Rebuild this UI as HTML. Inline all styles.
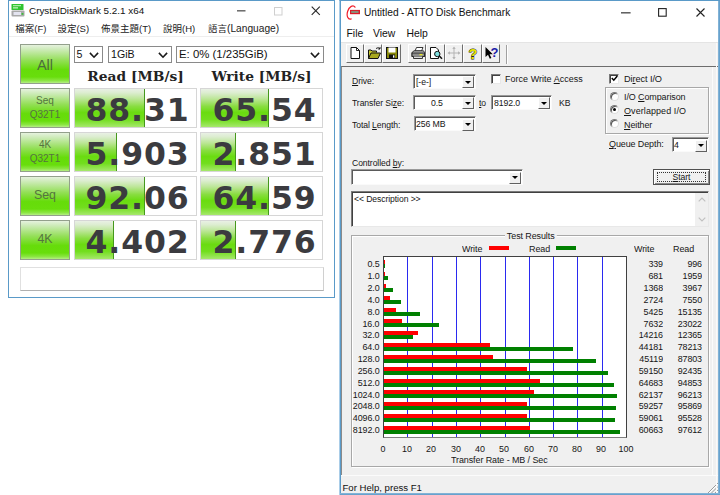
<!DOCTYPE html>
<html lang="zh-Hant"><head><meta charset="utf-8"><title>CrystalDiskMark / ATTO Disk Benchmark</title>
<style>
html,body{margin:0;padding:0;}
body{width:720px;height:495px;background:#fff;position:relative;overflow:hidden;font-family:"Liberation Sans","Noto Sans CJK TC",sans-serif;}
.abs,#cdm div,#cdm svg,#atto div,#atto svg{position:absolute;box-sizing:border-box;white-space:nowrap;}
#cdm{position:absolute;left:8px;top:0;width:327px;height:298px;border:1px solid #5a9ac8;background:#fff;box-sizing:border-box;}
#atto{position:absolute;left:339px;top:0;width:381px;height:495px;background:#f0f0f0;box-sizing:border-box;border-left:1px solid #a9cde8;border-top:1px solid #5a9ac8;}
/* ---- CDM ---- */
#cdm .title{left:20px;top:2.5px;font-size:9.9px;color:#111;line-height:14px;}
#cdm .menu{top:21px;font-size:9.5px;color:#222;line-height:14px;}
#cdm .sep{left:0;top:35px;width:325px;height:1px;background:#eee;}
.gbtn{border:1px solid #93a08c;background:linear-gradient(#e6f2de 0%,#cdebb8 12%,#94df58 40%,#66dc0a 65%,#68de0c 84%,#8ce644 94%,#b4ee84 100%);color:#55743f;text-align:center;font-size:10px;line-height:13.5px;}
.vbox{height:40px;width:123px;border:1px solid #d6d6d6;background:#fff;overflow:hidden;}
.vbox .fill{left:0;top:0;height:38px;background:linear-gradient(#e9f0e5 0%,#dcedd0 10%,#bce697 26%,#88dd40 46%,#6adc10 62%,#72de1e 80%,#a6e86c 100%);border-right:1px solid #45981c;}
.vbox .num{right:5.4px;top:1.8px;letter-spacing:0.9px;line-height:38px;font-family:"DejaVu Sans","Liberation Sans",sans-serif;font-weight:bold;font-size:31.5px;color:#3b3b3f;}
.hdr{font-family:"DejaVu Serif","Liberation Serif",serif;font-weight:bold;font-size:13.8px;color:#222;line-height:16px;text-align:center;}
.cmb{border:1px solid #8a8a8a;background:#fff;height:17px;font-size:10.6px;line-height:15px;color:#111;padding-left:2px;}
.cmb svg{right:2.8px;top:5.2px;}
.tbox{left:11px;top:266px;width:304px;height:24px;border:1px solid #e0e0e0;border-bottom-color:#b0b0b0;border-right-color:#d0d0d0;background:#fff;}
/* ---- ATTO ---- */
#atto .tbar{left:0;top:0;width:380px;height:22px;background:#fff;}
#atto .title{left:24px;top:3.5px;font-size:10.2px;line-height:15px;color:#111;}
#atto .mbar{left:0;top:22px;width:380px;height:19px;background:#fff;}
#atto .mi{top:26px;font-size:10.4px;line-height:14px;color:#111;}
#atto .tool{left:1px;top:41px;width:379px;height:24px;background:#f0f0f0;border-top:1px solid #e4e4e4;}
#atto .client{left:1px;top:65px;width:378px;height:409px;border-top:1px solid #6d6d6d;border-left:1px solid #8a8a8a;background:#f0f0f0;}
.tb{top:43.4px;width:18.4px;height:18.8px;border:1px solid #fff;border-right-color:#6e6e6e;border-bottom-color:#6e6e6e;background:#f0f0f0;}
.lbl{font-size:9.7px;line-height:12px;color:#161616;letter-spacing:-0.1px;transform:scaleX(0.89);transform-origin:0 50%;margin-top:1px;}
.lbl u{text-decoration:underline;text-decoration-thickness:1px;text-underline-offset:1px;}
.combo{height:15px;background:#fff;border:1px solid #9a9a9a;border-right-color:#fafafa;border-bottom-color:#fafafa;box-shadow:inset 1px 1px 0 #5a5a5a;font-size:9.7px;line-height:13px;color:#161616;padding-left:1.5px;padding-top:0;}
.combo span{display:inline-block;transform:scaleX(0.9);transform-origin:0 50%;letter-spacing:-0.1px;}
.combo .dd{right:1px;top:1.5px;width:12px;height:12px;background:#f0f0f0;border:1px solid #fff;border-right-color:#606060;border-bottom-color:#606060;}
.combo .dd:after{content:"";position:absolute;left:2px;top:3.5px;border-left:3px solid transparent;border-right:3px solid transparent;border-top:3px solid #000;}
.chk{width:10px;height:10px;background:#fff;border:1px solid #7a7a7a;border-right-color:#e8e8e8;border-bottom-color:#e8e8e8;box-shadow:inset 1px 1px 0 #404040;}
.rad{width:9px;height:9px;border-radius:50%;background:#fff;border:1px solid #7a7a7a;border-right-color:#ddd;border-bottom-color:#ddd;box-shadow:inset 1px 1px 0 #555;}
.grp{border:1px solid #a8a8a8;box-shadow:1px 1px 0 #fff, inset 1px 1px 0 #fff;}
.gl{width:1px;height:180px;background:#2a2af0;}
.rl{left:0;width:39.5px;text-align:right;font-size:9.7px;line-height:13px;color:#161616;letter-spacing:-0.1px;transform:scaleX(0.92);transform-origin:100% 50%;}
.bw{left:44px;height:4px;background:#f00;}
.br{left:44px;height:4px;background:#008000;}
.nw{left:250px;width:73px;text-align:right;font-size:9.7px;line-height:13px;color:#161616;letter-spacing:-0.1px;transform:scaleX(0.92);transform-origin:100% 50%;}
.nr{left:290px;width:72px;text-align:right;font-size:9.7px;line-height:13px;color:#161616;letter-spacing:-0.1px;transform:scaleX(0.92);transform-origin:100% 50%;}
.al{top:440.5px;width:30px;text-align:center;font-size:9.7px;line-height:13px;color:#161616;transform:scaleX(0.92);}
.w{transform:scaleX(0.925) !important;}
.w2{transform:scaleX(0.95) !important;}

</style></head><body>
<div id="cdm">
  <svg style="left:2px;top:3px" width="14" height="13" viewBox="0 0 14 13"><rect x="0.5" y="0" width="12" height="6" rx="0.5" fill="#2fc42f"/><rect x="2" y="1.2" width="8" height="1" fill="#c8f4c0"/><rect x="2" y="3.4" width="5" height="1" fill="#e8ffe0"/><rect x="0.5" y="6.5" width="13" height="6" rx="1" fill="#a9a9a9"/><rect x="2.5" y="8" width="7.5" height="3" fill="#e4e4f0"/><rect x="10.6" y="9" width="1.8" height="1.8" fill="#38c038"/></svg>
  <div class="title">CrystalDiskMark 5.2.1 x64</div>
  <svg style="left:228px;top:9.3px" width="9" height="2" viewBox="0 0 9 2"><rect x="0" y="0.3" width="8.5" height="1.1" fill="#333"/></svg>
  <svg style="left:265px;top:6px" width="9" height="9" viewBox="0 0 9 9"><rect x="0.5" y="0.5" width="7.5" height="7.5" fill="none" stroke="#cfcfcf" stroke-width="1"/></svg>
  <svg style="left:302.3px;top:5.3px" width="10" height="10" viewBox="0 0 10 10"><path d="M0.7 0.7 L8.8 8.8 M8.8 0.7 L0.7 8.8" stroke="#2a2a2a" stroke-width="1.15" fill="none"/></svg>
  <div class="menu" style="left:6.3px">檔案(F)</div>
  <div class="menu" style="left:48.4px">設定(S)</div>
  <div class="menu" style="left:92px">佈景主題(T)</div>
  <div class="menu" style="left:154px">說明(H)</div>
  <div class="menu" style="left:199px">語言<span style="font-size:10.2px">(Language)</span></div>
  <div class="sep"></div>

  <div class="gbtn" style="left:11px;top:43px;width:50px;height:40px;font-size:14.5px;line-height:40px;color:#4c6e3a">All</div>
  <div class="cmb" style="left:64.5px;top:45px;width:29px">5<svg width="10" height="6.4" viewBox="0 0 10 6.4"><path d="M0.9 0.9 L5 5.2 L9.1 0.9" stroke="#1a1a1a" stroke-width="1.6" fill="none"/></svg></div>
  <div class="cmb" style="left:99px;top:45px;width:64px">1GiB<svg width="10" height="6.4" viewBox="0 0 10 6.4"><path d="M0.9 0.9 L5 5.2 L9.1 0.9" stroke="#1a1a1a" stroke-width="1.6" fill="none"/></svg></div>
  <div class="cmb" style="left:167px;top:45px;width:147.8px;font-size:11.4px">E: 0% (1/235GiB)<svg width="10" height="6.4" viewBox="0 0 10 6.4"><path d="M0.9 0.9 L5 5.2 L9.1 0.9" stroke="#1a1a1a" stroke-width="1.6" fill="none"/></svg></div>
  <div class="hdr" style="left:65px;top:67px;width:123px">Read [MB/s]</div>
  <div class="hdr" style="left:191px;top:67px;width:123px">Write [MB/s]</div>

  <div class="gbtn" style="left:11px;top:87px;width:50px;height:40px;padding-top:5.2px">Seq<br>Q32T1</div>
  <div class="vbox" style="left:65px;top:87px"><div class="fill" style="width:70.3px"></div><div class="num" style="right:6.4px">88.31</div></div>
  <div class="vbox" style="left:191px;top:87px"><div class="fill" style="width:68px"></div><div class="num">65.54</div></div>

  <div class="gbtn" style="left:11px;top:131px;width:50px;height:40px;padding-top:5.2px">4K<br>Q32T1</div>
  <div class="vbox" style="left:65px;top:131px"><div class="fill" style="width:41.8px"></div><div class="num" style="right:6.4px">5.903</div></div>
  <div class="vbox" style="left:191px;top:131px"><div class="fill" style="width:34.7px"></div><div class="num">2.851</div></div>

  <div class="gbtn" style="left:11px;top:175px;width:50px;height:40px;font-size:12.4px;line-height:37px">Seq</div>
  <div class="vbox" style="left:65px;top:175px"><div class="fill" style="width:70.3px"></div><div class="num" style="right:6.4px">92.06</div></div>
  <div class="vbox" style="left:191px;top:175px"><div class="fill" style="width:68px"></div><div class="num">64.59</div></div>

  <div class="gbtn" style="left:11px;top:219px;width:50px;height:40px;font-size:12.4px;line-height:37px">4K</div>
  <div class="vbox" style="left:65px;top:219px"><div class="fill" style="width:39.2px"></div><div class="num" style="right:6.4px">4.402</div></div>
  <div class="vbox" style="left:191px;top:219px"><div class="fill" style="width:35px"></div><div class="num">2.776</div></div>

  <div class="tbox"></div>
</div>

<div id="atto">
  <div class="tbar"></div>
  <div style="left:0;top:0;width:1px;height:494px;background:#5a9ac8;z-index:5"></div>
  <svg style="left:6px;top:4px" width="16" height="15" viewBox="0 0 16 15"><path d="M9.01 2.16 A4 6.8 18 1 0 5.2 13.88" fill="none" stroke="#f0202c" stroke-width="1.2" stroke-linecap="round"/><rect x="4" y="4.9" width="10" height="4.3" fill="#dc1a28"/><rect x="5.2" y="5.9" width="7.4" height="2.1" fill="#8c8c78"/></svg>
  <div class="title">Untitled - ATTO Disk Benchmark</div>
  <svg style="left:281px;top:11px" width="10" height="2" viewBox="0 0 10 2"><rect x="0" y="0.3" width="9.6" height="1.1" fill="#222"/></svg>
  <svg style="left:318px;top:7px" width="9" height="9" viewBox="0 0 9 9"><rect x="0.6" y="0.6" width="7.6" height="7.6" fill="none" stroke="#222" stroke-width="1.1"/></svg>
  <svg style="left:356px;top:7px" width="9" height="9" viewBox="0 0 9 9"><path d="M0.5 0.5 L8.5 8.5 M8.5 0.5 L0.5 8.5" stroke="#222" stroke-width="1.1" fill="none"/></svg>
  <div class="mbar"></div>
  <div class="mi" style="left:6.5px">File</div>
  <div class="mi" style="left:33px">View</div>
  <div class="mi" style="left:66.5px">Help</div>
  <div class="tool"></div>
  <div class="tb" style="left:5.6px"><svg width="18" height="18" viewBox="0 0 18 18" style="left:-0.5px;top:-1.2px"><path d="M5 3.5 H10.5 L13.5 6.5 V14.5 H5 Z" fill="#fff" stroke="#111" stroke-width="1"/><path d="M10.5 3.5 V6.5 H13.5" fill="none" stroke="#111" stroke-width="0.9"/></svg></div>
  <div class="tb" style="left:24px"><svg width="18" height="18" viewBox="0 0 18 18" style="left:-0.5px;top:-1.2px"><path d="M3.5 14.5 V6 H6 L7 7 H11.5 V8.5" fill="#c9c92c" stroke="#111" stroke-width="1"/><path d="M3.5 14.5 L6 9 H15.5 L13 14.5 Z" fill="#a8a81e" stroke="#111" stroke-width="1"/><path d="M11 4.5 q2.5 -2 4 0.5 l0 -2 M15 5 l-1.8 0" fill="none" stroke="#111" stroke-width="0.9"/></svg></div>
  <div class="tb" style="left:42.4px"><svg width="18" height="18" viewBox="0 0 18 18" style="left:-0.5px;top:-1.2px"><rect x="3.5" y="3.5" width="11" height="11" fill="#8a8a0a" stroke="#111" stroke-width="1"/><rect x="5.5" y="3.5" width="7" height="5" fill="#fff"/><rect x="6" y="10.5" width="6" height="4" fill="#111"/><rect x="10" y="11.3" width="1.4" height="2.4" fill="#fff"/></svg></div>
  <div class="tb" style="left:68px"><svg width="18" height="18" viewBox="0 0 18 18" style="left:-0.5px;top:-1.2px"><path d="M6 7 L7.5 3.5 H14 L12.5 7 Z" fill="#fff" stroke="#222" stroke-width="0.9"/><path d="M3 8.5 L5 6.8 H14.5 L15.5 8.5 V12.5 H3 Z" fill="#b8b8b8" stroke="#222" stroke-width="0.9"/><rect x="3" y="9" width="12.5" height="3.5" fill="#8c8c8c" stroke="#222" stroke-width="0.9"/><rect x="10.5" y="10" width="3" height="1.3" fill="#e8e820"/><path d="M4.5 12.5 V14.5 H13.5 V12.5" fill="#ddd" stroke="#222" stroke-width="0.9"/></svg></div>
  <div class="tb" style="left:86.4px"><svg width="18" height="18" viewBox="0 0 18 18" style="left:-0.5px;top:-1.2px"><path d="M3.5 3.5 H9 L11.5 6 V14.5 H3.5 Z" fill="#fff" stroke="#111" stroke-width="1"/><circle cx="10.3" cy="10" r="2.7" fill="#7fe0e0" stroke="#111" stroke-width="1"/><path d="M12.3 12 L15 14.8" stroke="#111" stroke-width="1.6"/></svg></div>
  <div class="tb" style="left:104.8px"><svg width="18" height="18" viewBox="0 0 18 18" style="left:-0.5px;top:-1.2px"><path d="M9 3.5 V14.5 M3.5 9 H14.5" stroke="#b4b4b4" stroke-width="1"/><path d="M9 2.5 L7.3 5 H10.7 Z M9 15.5 L7.3 13 H10.7 Z M2.5 9 L5 7.3 V10.7 Z M15.5 9 L13 7.3 V10.7 Z" fill="#b4b4b4"/></svg></div>
  <div class="tb" style="left:123.3px"><svg width="18" height="18" viewBox="0 0 18 18" style="left:-0.5px;top:-1.2px"><text x="9" y="14.6" text-anchor="middle" font-family="Liberation Sans, sans-serif" font-weight="bold" font-size="14.5" fill="#e6e600" stroke="#222" stroke-width="0.9" paint-order="stroke">?</text></svg></div>
  <div class="tb" style="left:141.9px"><svg width="18" height="18" viewBox="0 0 18 18" style="left:-0.5px;top:-1.2px"><path d="M3.5 3 V13 L6 10.8 L7.8 14.8 L9.4 14 L7.6 10.2 H10.8 Z" fill="#000"/><text x="12.6" y="13" text-anchor="middle" font-family="Liberation Sans, sans-serif" font-weight="bold" font-size="13" fill="#1a1aa8">?</text></svg></div>
  <div style="left:166px;top:44px;width:1px;height:19px;background:#a0a0a0;border-right:1px solid #fff;box-sizing:content-box"></div>
  <div class="client"></div>

  <div class="lbl" style="left:11.5px;top:73px"><u>D</u>rive:</div>
  <div class="combo" style="left:73.3px;top:72.5px;width:62.3px"><span>[-e-]</span><div class="dd"></div></div>
  <div class="lbl" style="left:11.5px;top:95px">Transfer Si<u>z</u>e:</div>
  <div class="combo" style="left:73.3px;top:93.8px;width:62.3px;text-align:center;padding:0 14px 0 0"><span>0.5</span><div class="dd"></div></div>
  <div class="lbl" style="left:139px;top:95px"><u>t</u>o</div>
  <div class="combo" style="left:151px;top:93.8px;width:61px"><span>8192.0</span><div class="dd"></div></div>
  <div class="lbl" style="left:219px;top:95px">KB</div>
  <div class="lbl" style="left:11.5px;top:117px">Total <u>L</u>ength:</div>
  <div class="combo" style="left:73.5px;top:115.2px;width:62.3px"><span>256 MB</span><div class="dd"></div></div>

  <div class="chk" style="left:151.3px;top:72.6px"></div>
  <div class="lbl w" style="left:165px;top:71.3px;letter-spacing:0.05px">Force Write <u>A</u>ccess</div>
  <div class="chk" style="left:269.3px;top:72.6px"><svg style="left:0.5px;top:0.5px" width="7" height="7" viewBox="0 0 7 7"><path d="M0.8 3 L2.8 5.2 L6.3 1" stroke="#000" stroke-width="1.5" fill="none"/></svg></div>
  <div class="lbl w2" style="left:284px;top:71.3px">Di<u>r</u>ect I/O</div>
  <div class="grp" style="left:265px;top:86px;width:104px;height:47px"></div>
  <div class="rad" style="left:270px;top:90.5px"></div>
  <div class="lbl w" style="left:284px;top:89.3px">I/O <u>C</u>omparison</div>
  <div class="rad" style="left:270px;top:104.3px"><div style="left:2px;top:2px;width:3px;height:3px;background:#000;border-radius:50%"></div></div>
  <div class="lbl w" style="left:284px;top:103px;letter-spacing:0.1px"><u>O</u>verlapped I/O</div>
  <div class="rad" style="left:270px;top:118.2px"></div>
  <div class="lbl w" style="left:284px;top:117px"><u>N</u>either</div>
  <div class="lbl w" style="left:269px;top:136.3px"><u>Q</u>ueue Depth:</div>
  <div class="combo" style="left:331.5px;top:136px;width:37px"><span>4</span><div class="dd"></div></div>

  <div class="lbl" style="left:11.5px;top:155.3px">Controlled <u>b</u>y:</div>
  <div class="combo" style="left:10.6px;top:168.2px;width:172.8px;height:15.5px"><div class="dd"></div></div>
  <div style="left:313.3px;top:168.3px;width:56.4px;height:15.6px;background:#f0f0f0;border:1px solid #505050;box-shadow:inset 1px 1px 0 #fff, inset -1px -1px 0 #8a8a8a;"></div>
  <div style="left:317px;top:171px;width:49px;height:9.5px;border:1px dotted #333;"></div>
  <div class="lbl" style="left:313px;top:169px;width:57px;text-align:center;transform-origin:50% 50%"><u>S</u>tart</div>

  <div style="left:10.6px;top:189.5px;width:358.4px;height:36.5px;background:#fff;border:1px solid #7a7a7a;border-right-color:#e8e8e8;border-bottom-color:#e8e8e8;box-shadow:inset 1px 1px 0 #404040;"></div>
  <div class="lbl" style="left:13.5px;top:190.7px">&lt;&lt; Description &gt;&gt;</div>
  <div style="left:355px;top:192px;width:13px;height:33px;background:#f0f0f0;"></div>
  <svg style="left:357.5px;top:196px" width="8" height="5" viewBox="0 0 8 5"><path d="M0.7 4.3 L4 1 L7.3 4.3" stroke="#c0c0c0" stroke-width="1.2" fill="none"/></svg>
  <svg style="left:357.5px;top:216px" width="8" height="5" viewBox="0 0 8 5"><path d="M0.7 0.7 L4 4 L7.3 0.7" stroke="#c0c0c0" stroke-width="1.2" fill="none"/></svg>

  <div class="grp" style="left:11px;top:234px;width:358px;height:232px"></div>
  <div class="lbl w" style="left:165px;top:228px;background:#f0f0f0;padding:0 2px">Test Results</div>
  <div class="lbl w" style="left:121.5px;top:241px">Write</div>
  <div style="left:149px;top:245.2px;width:20px;height:4px;background:#f00"></div>
  <div class="lbl w" style="left:189px;top:241px">Read</div>
  <div style="left:216px;top:245.2px;width:20px;height:4px;background:#008000"></div>
  <div class="lbl w" style="left:293.7px;top:241px">Write</div>
  <div class="lbl w" style="left:333px;top:241px">Read</div>

  <div id="plot" style="left:43px;top:255px;width:244px;height:182px;background:#fff;border:1px solid #404040;border-bottom-color:#808080"></div>
  <div id="ch" style="left:0;top:0;width:380px;height:480px">
<div class="gl" style="left:67.3px;top:256px"></div>
<div class="gl" style="left:91.6px;top:256px"></div>
<div class="gl" style="left:115.9px;top:256px"></div>
<div class="gl" style="left:140.2px;top:256px"></div>
<div class="gl" style="left:164.5px;top:256px"></div>
<div class="gl" style="left:188.8px;top:256px"></div>
<div class="gl" style="left:213.1px;top:256px"></div>
<div class="gl" style="left:237.4px;top:256px"></div>
<div class="gl" style="left:261.7px;top:256px"></div>
<div class="rl" style="top:256.3px">0.5</div>
<div class="bw" style="top:259.1px;width:0.6px"></div>
<div class="br" style="top:263.1px;width:1.4px"></div>
<div class="nw" style="top:256.3px">339</div>
<div class="nr" style="top:256.3px">996</div>
<div class="rl" style="top:268.1px">1.0</div>
<div class="bw" style="top:270.9px;width:0.7px"></div>
<div class="br" style="top:274.9px;width:3.8px"></div>
<div class="nw" style="top:268.1px">681</div>
<div class="nr" style="top:268.1px">1959</div>
<div class="rl" style="top:280.0px">2.0</div>
<div class="bw" style="top:282.8px;width:2.3px"></div>
<div class="br" style="top:286.8px;width:8.6px"></div>
<div class="nw" style="top:280.0px">1368</div>
<div class="nr" style="top:280.0px">3967</div>
<div class="rl" style="top:291.8px">4.0</div>
<div class="bw" style="top:294.6px;width:5.6px"></div>
<div class="br" style="top:298.6px;width:17.3px"></div>
<div class="nw" style="top:291.8px">2724</div>
<div class="nr" style="top:291.8px">7550</div>
<div class="rl" style="top:303.7px">8.0</div>
<div class="bw" style="top:306.5px;width:12.2px"></div>
<div class="br" style="top:310.5px;width:35.8px"></div>
<div class="nw" style="top:303.7px">5425</div>
<div class="nr" style="top:303.7px">15135</div>
<div class="rl" style="top:315.5px">16.0</div>
<div class="bw" style="top:318.3px;width:17.5px"></div>
<div class="br" style="top:322.3px;width:54.9px"></div>
<div class="nw" style="top:315.5px">7632</div>
<div class="nr" style="top:315.5px">23022</div>
<div class="rl" style="top:327.3px">32.0</div>
<div class="bw" style="top:330.1px;width:33.5px"></div>
<div class="br" style="top:334.1px;width:29.0px"></div>
<div class="nw" style="top:327.3px">14216</div>
<div class="nr" style="top:327.3px">12365</div>
<div class="rl" style="top:339.2px">64.0</div>
<div class="bw" style="top:342.0px;width:106.4px"></div>
<div class="br" style="top:346.0px;width:189.1px"></div>
<div class="nw" style="top:339.2px">44181</div>
<div class="nr" style="top:339.2px">78213</div>
<div class="rl" style="top:351.0px">128.0</div>
<div class="bw" style="top:353.8px;width:108.6px"></div>
<div class="br" style="top:357.8px;width:212.4px"></div>
<div class="nw" style="top:351.0px">45119</div>
<div class="nr" style="top:351.0px">87803</div>
<div class="rl" style="top:362.9px">256.0</div>
<div class="bw" style="top:365.7px;width:142.7px"></div>
<div class="br" style="top:369.7px;width:223.6px"></div>
<div class="nw" style="top:362.9px">59150</div>
<div class="nr" style="top:362.9px">92435</div>
<div class="rl" style="top:374.7px">512.0</div>
<div class="bw" style="top:377.5px;width:156.2px"></div>
<div class="br" style="top:381.5px;width:229.5px"></div>
<div class="nw" style="top:374.7px">64683</div>
<div class="nr" style="top:374.7px">94853</div>
<div class="rl" style="top:386.5px">1024.0</div>
<div class="bw" style="top:389.3px;width:150.0px"></div>
<div class="br" style="top:393.3px;width:232.8px"></div>
<div class="nw" style="top:386.5px">62137</div>
<div class="nr" style="top:386.5px">96213</div>
<div class="rl" style="top:398.4px">2048.0</div>
<div class="bw" style="top:401.2px;width:143.0px"></div>
<div class="br" style="top:405.2px;width:232.0px"></div>
<div class="nw" style="top:398.4px">59257</div>
<div class="nr" style="top:398.4px">95869</div>
<div class="rl" style="top:410.2px">4096.0</div>
<div class="bw" style="top:413.0px;width:142.5px"></div>
<div class="br" style="top:417.0px;width:231.1px"></div>
<div class="nw" style="top:410.2px">59061</div>
<div class="nr" style="top:410.2px">95528</div>
<div class="rl" style="top:422.1px">8192.0</div>
<div class="bw" style="top:424.9px;width:146.4px"></div>
<div class="br" style="top:428.9px;width:236.2px"></div>
<div class="nw" style="top:422.1px">60663</div>
<div class="nr" style="top:422.1px">97612</div>
<div class="al" style="left:27.7px">0</div>
<div class="al" style="left:52.0px">10</div>
<div class="al" style="left:76.3px">20</div>
<div class="al" style="left:100.6px">30</div>
<div class="al" style="left:124.9px">40</div>
<div class="al" style="left:149.2px">50</div>
<div class="al" style="left:173.5px">60</div>
<div class="al" style="left:197.8px">70</div>
<div class="al" style="left:222.1px">80</div>
<div class="al" style="left:246.4px">90</div>
<div class="al" style="left:270.7px">100</div>
  </div>
  <div class="lbl w" style="left:111px;top:452px">Transfer Rate - MB / Sec</div>

  <div style="left:1px;top:474px;width:379px;height:20px;background:#f0f0f0;border-top:1px solid #fbfbfb"></div>
  <div style="left:2.5px;top:479.5px;font-size:9.6px;line-height:13px;color:#111">For Help, press F1</div>
  <svg style="left:367px;top:481px" width="12" height="12" viewBox="0 0 12 12"><path d="M11.5 1.5 L1.5 11.5 M11.5 5 L5 11.5 M11.5 8.5 L8.5 11.5" stroke="#fff" stroke-width="1"/><path d="M11 1 L1 11 M11 4.5 L4.5 11 M11 8 L8 11" stroke="#9a9a9a" stroke-width="1"/></svg>
  <div style="left:372px;top:66px;width:1px;height:409px;background:#fbfbfb"></div>
  <div style="left:376px;top:42px;width:1px;height:452px;background:#fafafa"></div>
  <div style="left:378px;top:0;width:2px;height:494px;background:linear-gradient(90deg,#8fbadb,#5a9ac8);z-index:6"></div>
  <div style="left:0;top:492px;width:380px;height:2px;background:linear-gradient(#8fbadb,#5a9ac8);z-index:6"></div>
</div>

</body></html>
